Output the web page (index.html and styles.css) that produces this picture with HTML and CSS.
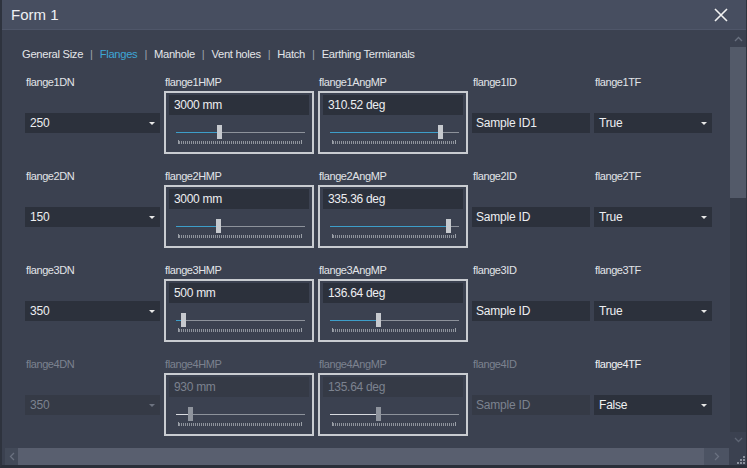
FILE: index.html
```html
<!DOCTYPE html>
<html>
<head>
<meta charset="utf-8">
<link rel="stylesheet" href="styles.css">
</head>
<body>
<div class="window">
  <div class="titlebar">
    <span class="title">Form 1</span>
    <svg class="close" width="14" height="14" viewBox="0 0 14 14"><path d="M1 1L13 13M13 1L1 13" stroke="#f2f2f2" stroke-width="1.6" fill="none"/></svg>
  </div>
  <div class="main">
    <div class="content">
      <nav class="tabs">
        <span class="tab">General Size</span><span class="sep">|</span>
        <span class="tab active">Flanges</span><span class="sep">|</span>
        <span class="tab">Manhole</span><span class="sep">|</span>
        <span class="tab">Vent holes</span><span class="sep">|</span>
        <span class="tab">Hatch</span><span class="sep">|</span>
        <span class="tab">Earthing Termianals</span>
      </nav>
      <div class="rows">
        <div class="row">
          <div class="cell"><div class="label">flange1DN</div><div class="cell-body"><div class="combo"><span>250</span><i class="arrow"></i></div></div></div>
          <div class="cell"><div class="label">flange1HMP</div><div class="cell-body"><div class="box"><div class="value">3000 mm</div><div class="slider"><div class="track"><div class="fill" style="width:33%"></div><div class="thumb" style="left:33%"></div></div><div class="ticks"></div></div></div></div></div>
          <div class="cell"><div class="label">flange1AngMP</div><div class="cell-body"><div class="box"><div class="value">310.52 deg</div><div class="slider"><div class="track"><div class="fill" style="width:85%"></div><div class="thumb" style="left:85%"></div></div><div class="ticks"></div></div></div></div></div>
          <div class="cell"><div class="label">flange1ID</div><div class="cell-body"><div class="field">Sample ID1</div></div></div>
          <div class="cell"><div class="label">flange1TF</div><div class="cell-body"><div class="combo"><span>True</span><i class="arrow"></i></div></div></div>
        </div>
        <div class="row">
          <div class="cell"><div class="label">flange2DN</div><div class="cell-body"><div class="combo"><span>150</span><i class="arrow"></i></div></div></div>
          <div class="cell"><div class="label">flange2HMP</div><div class="cell-body"><div class="box"><div class="value">3000 mm</div><div class="slider"><div class="track"><div class="fill" style="width:32.5%"></div><div class="thumb" style="left:32.5%"></div></div><div class="ticks"></div></div></div></div></div>
          <div class="cell"><div class="label">flange2AngMP</div><div class="cell-body"><div class="box"><div class="value">335.36 deg</div><div class="slider"><div class="track"><div class="fill" style="width:91.5%"></div><div class="thumb" style="left:91.5%"></div></div><div class="ticks"></div></div></div></div></div>
          <div class="cell"><div class="label">flange2ID</div><div class="cell-body"><div class="field">Sample ID</div></div></div>
          <div class="cell"><div class="label">flange2TF</div><div class="cell-body"><div class="combo"><span>True</span><i class="arrow"></i></div></div></div>
        </div>
        <div class="row">
          <div class="cell"><div class="label">flange3DN</div><div class="cell-body"><div class="combo"><span>350</span><i class="arrow"></i></div></div></div>
          <div class="cell"><div class="label">flange3HMP</div><div class="cell-body"><div class="box"><div class="value">500 mm</div><div class="slider"><div class="track"><div class="fill" style="width:5.5%"></div><div class="thumb" style="left:5.5%"></div></div><div class="ticks"></div></div></div></div></div>
          <div class="cell"><div class="label">flange3AngMP</div><div class="cell-body"><div class="box"><div class="value">136.64 deg</div><div class="slider"><div class="track"><div class="fill" style="width:37.5%"></div><div class="thumb" style="left:37.5%"></div></div><div class="ticks"></div></div></div></div></div>
          <div class="cell"><div class="label">flange3ID</div><div class="cell-body"><div class="field">Sample ID</div></div></div>
          <div class="cell"><div class="label">flange3TF</div><div class="cell-body"><div class="combo"><span>True</span><i class="arrow"></i></div></div></div>
        </div>
        <div class="row disabled">
          <div class="cell"><div class="label">flange4DN</div><div class="cell-body"><div class="combo"><span>350</span><i class="arrow"></i></div></div></div>
          <div class="cell"><div class="label">flange4HMP</div><div class="cell-body"><div class="box"><div class="value">930 mm</div><div class="slider"><div class="track"><div class="fill" style="width:11%"></div><div class="thumb" style="left:11%"></div></div><div class="ticks"></div></div></div></div></div>
          <div class="cell"><div class="label">flange4AngMP</div><div class="cell-body"><div class="box"><div class="value">135.64 deg</div><div class="slider"><div class="track"><div class="fill" style="width:37.3%"></div><div class="thumb" style="left:37.3%"></div></div><div class="ticks"></div></div></div></div></div>
          <div class="cell"><div class="label">flange4ID</div><div class="cell-body"><div class="field">Sample ID</div></div></div>
          <div class="cell enabled"><div class="label">flange4TF</div><div class="cell-body"><div class="combo"><span>False</span><i class="arrow"></i></div></div></div>
        </div>
      </div>
    </div>
    <div class="vscroll">
      <div class="sbtn"><svg width="9" height="6" viewBox="0 0 9 6"><path d="M1 5L4.5 1.5L8 5" stroke="#6a7180" stroke-width="1.3" fill="none"/></svg></div>
      <div class="vthumb"></div>
      <div class="vtrack"></div>
      <div class="sbtn"><svg width="9" height="6" viewBox="0 0 9 6"><path d="M1 1L4.5 4.5L8 1" stroke="#5d6473" stroke-width="1.3" fill="none"/></svg></div>
    </div>
  </div>
  <div class="hscroll">
    <div class="hbtn left"><svg width="6" height="9" viewBox="0 0 6 9"><path d="M5 1L1.5 4.5L5 8" stroke="#6a7180" stroke-width="1.3" fill="none"/></svg></div>
    <div class="hthumb"></div>
    <div class="hbtn right"><svg width="6" height="9" viewBox="0 0 6 9"><path d="M1 1L4.5 4.5L1 8" stroke="#6a7180" stroke-width="1.3" fill="none"/></svg></div>
    <div class="corner"><svg width="9" height="9" viewBox="0 0 9 9" fill="#8a909c"><rect x="7" y="1" width="2" height="2"/><rect x="4" y="4" width="2" height="2"/><rect x="7" y="4" width="2" height="2"/><rect x="1" y="7" width="2" height="2"/><rect x="4" y="7" width="2" height="2"/><rect x="7" y="7" width="2" height="2"/></svg></div>
  </div>
</div>
</body>
</html>
```

FILE: styles.css
```css
html, body {
  margin: 0;
  padding: 0;
}
body {
  width: 747px;
  height: 468px;
  overflow: hidden;
  background: #2a2f39;
  font-family: "Liberation Sans", Arial, sans-serif;
  color: #e2e4e8;
}
.window {
  width: 747px;
  height: 468px;
  box-sizing: border-box;
  border-left: 2px solid #2e333e;
  border-right: 1px solid #2e333e;
  border-bottom: 3px solid #2a2f39;
  background: #3b4150;
  display: flex;
  flex-direction: column;
}
.titlebar {
  height: 30px;
  flex: none;
  box-sizing: border-box;
  background: #474e60;
  border-bottom: 1px solid #4f5669;
  display: flex;
  align-items: center;
  justify-content: space-between;
  padding: 0 18px 0 9px;
}
.title {
  font-size: 15px;
  color: #eef0f3;
}
.close {
  display: block;
}
.main {
  flex: 1;
  display: flex;
  min-height: 0;
}
.content {
  flex: 1;
  padding: 16px 0 0 20px;
  overflow: hidden;
}
.tabs {
  display: flex;
  align-items: center;
  height: 16px;
  font-size: 11.2px;
  letter-spacing: -0.3px;
  line-height: 16px;
  color: #e4e6ea;
}
.tab.active {
  color: #3ea6d6;
}
.sep {
  color: #9da2ab;
  margin: 0 7px;
}
.rows {
  margin: 13px 0 0 3px;
  display: flex;
  flex-direction: column;
  gap: 15px;
}
.row {
  display: grid;
  grid-template-columns: 135px 150px 150px 118px 118px;
  column-gap: 4px;
}
.label {
  height: 16px;
  line-height: 14px;
  font-size: 11px;
  letter-spacing: -0.4px;
  padding-left: 1px;
  color: #e2e4e8;
}
.cell-body {
  height: 63px;
  display: flex;
  align-items: center;
}
.combo {
  flex: 1;
  height: 20px;
  background: #2c313c;
  display: flex;
  align-items: center;
  justify-content: space-between;
  padding: 0 5px 0 5px;
  font-size: 12px;
  letter-spacing: -0.2px;
  color: #eceef1;
}
.arrow {
  width: 0;
  height: 0;
  border-left: 3px solid transparent;
  border-right: 3px solid transparent;
  border-top: 3px solid #e8e8e8;
  margin-top: 1px;
}
.field {
  flex: 1;
  height: 20px;
  line-height: 20px;
  background: #2c313c;
  padding-left: 4px;
  font-size: 12px;
  letter-spacing: -0.2px;
  color: #eceef1;
}
.box {
  flex: 1;
  height: 63px;
  box-sizing: border-box;
  border: 2px solid #c9ccd1;
  padding: 2px 3px 0 3px;
  display: flex;
  flex-direction: column;
}
.value {
  height: 20px;
  line-height: 20px;
  background: #2c313c;
  padding-left: 5px;
  font-size: 12px;
  letter-spacing: -0.3px;
  color: #eceef1;
}
.slider {
  padding: 10px 4px 0 7px;
}
.track {
  position: relative;
  height: 14px;
  background: linear-gradient(#8d929b, #8d929b) 0 7px / 100% 1px no-repeat;
}
.fill {
  position: absolute;
  left: 0;
  top: 7px;
  height: 1px;
  background: #3d9ec9;
}
.thumb {
  position: absolute;
  top: 0;
  width: 5px;
  height: 14px;
  margin-left: -2px;
  background: #c6c9ce;
}
.ticks {
  margin: 1px 3px 0 2px;
  height: 4px;
  border-left: 1px solid #9ba0a8;
  border-right: 1px solid #9ba0a8;
  background: repeating-linear-gradient(to right, #8e939c 0 1px, transparent 1px 2px) 0 1px / 100% 3px no-repeat;
}
.disabled .label,
.disabled .combo,
.disabled .field,
.disabled .value {
  color: #7c828f;
}
.disabled .combo .arrow {
  border-top-color: #6d7380;
}
.disabled .combo,
.disabled .field,
.disabled .value {
  background: #353a46;
}
.disabled .fill {
  background: #d8dadf;
}
.disabled .thumb {
  background: #8f949d;
}
.disabled .enabled .label {
  color: #f0f1f3;
}
.disabled .enabled .combo {
  color: #f0f1f3;
  background: #2c313c;
}
.disabled .enabled .combo .arrow {
  border-top-color: #e8e8e8;
}
.vscroll {
  width: 16px;
  flex: none;
  display: flex;
  flex-direction: column;
  background: #363c49;
  margin-top: 1px;
}
.sbtn {
  height: 16px;
  display: flex;
  align-items: center;
  justify-content: center;
  background: #3b4150;
}
.vthumb {
  height: 151px;
  background: #535a69;
}
.vtrack {
  flex: 1;
}
.hscroll {
  height: 17px;
  flex: none;
  display: flex;
  background: #3b4150;
  padding-left: 3px;
}
.hbtn {
  display: flex;
  align-items: center;
  justify-content: center;
  background: #434a59;
}
.hbtn.left {
  width: 13px;
}
.hbtn.right {
  width: 25px;
  background: #4c5363;
}
.hthumb {
  flex: 1;
  background: #595f6f;
}
.corner {
  width: 17px;
  display: flex;
  align-items: flex-end;
  justify-content: flex-end;
  padding: 0 1px 1px 0;
  box-sizing: border-box;
  background: #3b4150;
}
```
